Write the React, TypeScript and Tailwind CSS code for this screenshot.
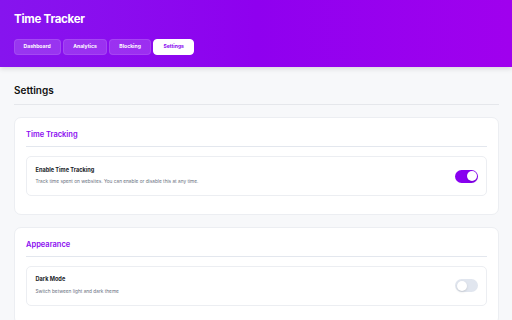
import React, { useState } from 'react';

const tabs = ['Dashboard', 'Analytics', 'Blocking', 'Settings'];

const Toggle = ({ on, onClick }: { on: boolean; onClick: () => void }) => (
  <button
    onClick={onClick}
    className={`relative w-[23px] h-[13px] rounded-full transition-colors ${on ? 'bg-[#8800f0]' : 'bg-[#e1e6ef]'}`}
  >
    <span
      className={`absolute top-[1.5px] w-[10px] h-[10px] rounded-full bg-white shadow-sm transition-all ${on ? 'left-[11.5px]' : 'left-[1.5px]'}`}
    />
  </button>
);

const SettingRow = ({
  title,
  desc,
  on,
  onClick,
}: {
  title: string;
  desc: string;
  on: boolean;
  onClick: () => void;
}) => (
  <div className="flex items-center justify-between h-[40px] pl-[8.5px] pr-[8px] border border-[#eceef2] rounded-[5px] bg-white">
    <div className="flex flex-col gap-[6px]">
      <span className="text-[5.6px] font-bold text-[#1a1d29] leading-none">{title}</span>
      <span className="text-[4.75px] text-[#6b7280] leading-none">{desc}</span>
    </div>
    <Toggle on={on} onClick={onClick} />
  </div>
);

const Section = ({ title, children }: { title: string; children: React.ReactNode }) => (
  <div className="bg-white border border-[#eceef2] rounded-[7px] px-[11px] pt-[13px] pb-[18px]">
    <h3 className="text-[7.5px] font-semibold text-[#8a0bef] leading-none pb-[7.5px] border-b border-[#e3e7ee] mb-[9px]">
      {title}
    </h3>
    {children}
  </div>
);

const App = () => {
  const [tracking, setTracking] = useState(true);
  const [dark, setDark] = useState(false);

  return (
    <div className="min-h-screen bg-[#f7f8fa] font-['Inter',sans-serif]">
      <div className="h-[67px] bg-gradient-to-r from-[#8614ee] via-[#8f00ef] to-[#a000ee] px-[14px] pt-[13.5px] shadow-[0_2px_5px_rgba(0,0,0,0.12)]">
        <h1 className="text-[11.5px] font-bold tracking-[-0.25px] text-white leading-none">Time Tracker</h1>
        <div className="flex gap-[2.5px] mt-[14px] -ml-[0.5px]">
          {tabs.map((t) => (
            <button
              key={t}
              className={`h-[16px] px-[9px] rounded-[4px] text-[5.1px] font-bold border ${
                t === 'Settings'
                  ? 'bg-white text-[#8a0bef] border-white'
                  : 'bg-white/15 text-white border-white/10'
              }`}
            >
              {t}
            </button>
          ))}
        </div>
      </div>

      <div className="pl-[14px] pr-[13px] pt-[18px]">
        <h2 className="text-[10px] font-semibold text-[#111] leading-none pb-[8.5px] border-b border-[#e5e7eb]">
          Settings
        </h2>
        <div className="flex flex-col gap-[11.5px] mt-[12.5px]">
          <Section title="Time Tracking">
            <SettingRow
              title="Enable Time Tracking"
              desc="Track time spent on websites. You can enable or disable this at any time."
              on={tracking}
              onClick={() => setTracking(!tracking)}
            />
          </Section>
          <Section title="Appearance">
            <SettingRow
              title="Dark Mode"
              desc="Switch between light and dark theme"
              on={dark}
              onClick={() => setDark(!dark)}
            />
          </Section>
        </div>
      </div>
    </div>
  );
};

export default App;
